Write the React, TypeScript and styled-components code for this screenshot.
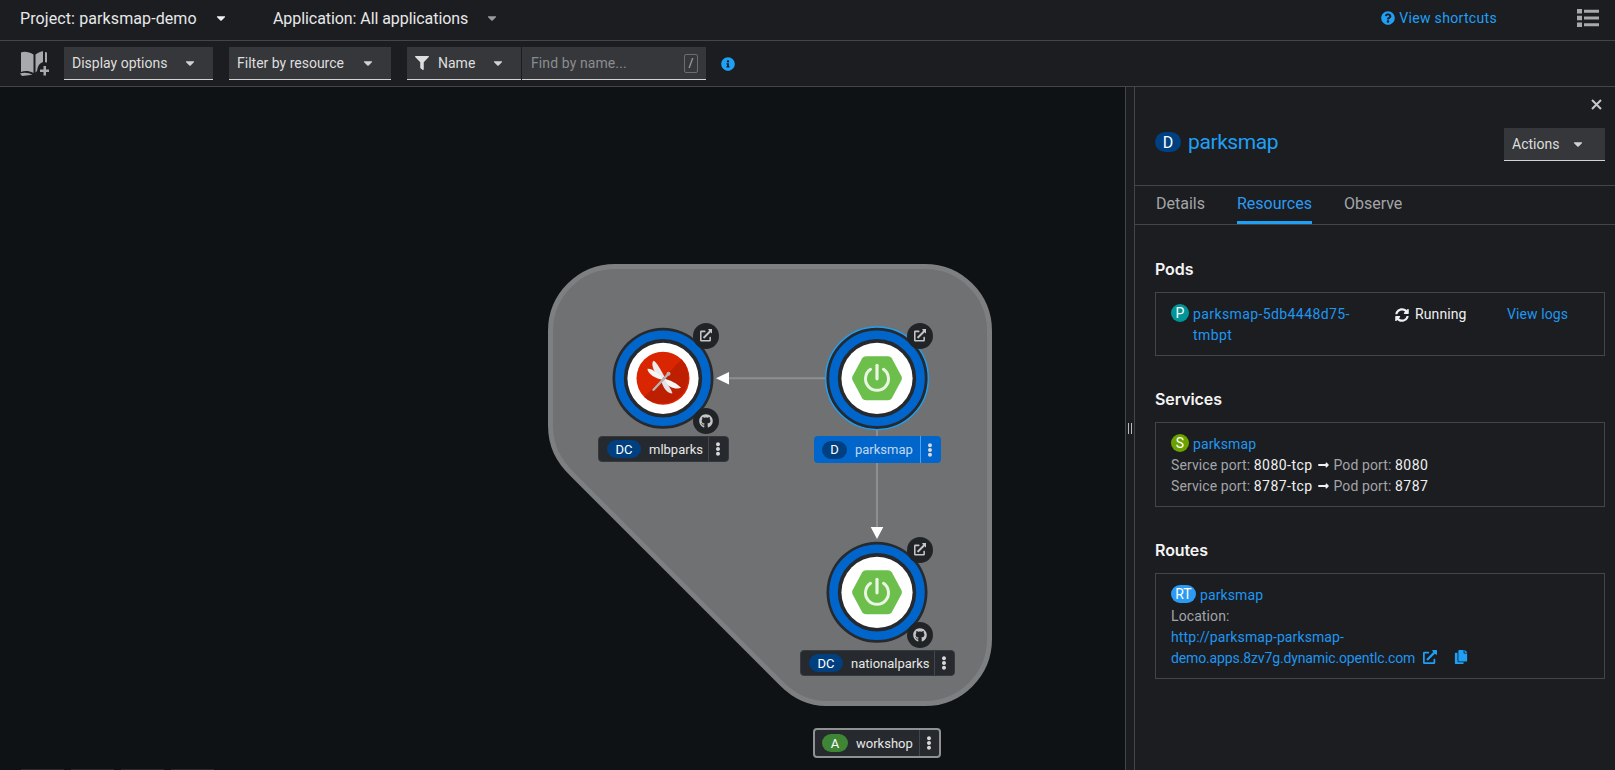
import type { FC, ReactNode } from "react";
import styled, { createGlobalStyle } from "styled-components";
import {
  FaCaretDown,
  FaCopy,
  FaEllipsisV,
  FaExternalLinkAlt,
  FaFilter,
  FaGithub,
  FaInfoCircle,
  FaLongArrowAltRight,
  FaQuestionCircle,
  FaSyncAlt,
} from "react-icons/fa";

const CANVAS_TOP = 87;

const GlobalStyle = createGlobalStyle`
  html, body {
    margin: 0;
    padding: 0;
    height: 100%;
    overflow: hidden;
    background: #1b1d21;
  }
  body {
    font-family: "Roboto", "Noto Sans", sans-serif;
    font-size: 14px;
    letter-spacing: 0.1px;
    color: #e0e0e0;
  }
  * {
    box-sizing: border-box;
  }
`;

const Page = styled.div`
  display: flex;
  flex-direction: column;
  width: 1615px;
  height: 770px;
  overflow: hidden;
`;

const TopBar = styled.div`
  display: flex;
  align-items: center;
  gap: 47px;
  height: 41px;
  padding: 0 16px 4px 20px;
  border-bottom: 1px solid #444548;
  font-size: 16px;
  color: #e8e8e8;
`;

const ProjectMenu = styled.div<{ $width: number; $spacing: number }>`
  display: flex;
  align-items: center;
  justify-content: space-between;
  width: ${(p) => p.$width}px;
  letter-spacing: ${(p) => p.$spacing}px;
  white-space: nowrap;
`;

const Caret = styled(FaCaretDown)<{ $color?: string }>`
  flex: none;
  width: 10px;
  height: 14px;
  color: ${(p) => p.$color ?? "#d2d2d2"};
`;

const Spacer = styled.div`
  flex: 1;
`;

const ShortcutLink = styled.div`
  display: flex;
  align-items: center;
  gap: 4px;
  margin-right: 33px;
  color: #1fa0f5;
  font-size: 14px;
  letter-spacing: 0.33px;
`;

const ListGlyph = styled.svg`
  width: 22px;
  height: 18px;
  color: #a8a9ab;
`;

const ToolBar = styled.div`
  display: flex;
  align-items: center;
  height: 46px;
  padding: 0 0 0 20px;
  border-bottom: 1px solid #444548;
`;

const BookGlyph = styled.svg`
  width: 29px;
  height: 25px;
  margin-right: 15px;
  color: #a8a9ab;
`;

const SelectBox = styled.div<{ $width: number; $mr?: number }>`
  display: flex;
  align-items: center;
  justify-content: space-between;
  width: ${(p) => p.$width}px;
  height: 33px;
  margin-right: ${(p) => p.$mr ?? 16}px;
  padding: 0 18px 0 8px;
  background: #36373a;
  border-bottom: 1px solid #d2d2d2;
  font-size: 14px;
  letter-spacing: 0;
  color: #dedede;
  white-space: nowrap;
`;

const NameLabel = styled.span`
  display: flex;
  align-items: center;
  gap: 9px;
`;

const SearchBox = styled.div`
  display: flex;
  align-items: center;
  justify-content: space-between;
  width: 184px;
  height: 33px;
  margin-left: 1px;
  padding: 0 8px 0 9px;
  background: #36373a;
  border-bottom: 1px solid #d2d2d2;
  color: #8a8d90;
  font-size: 14px;
`;

const SlashKey = styled.span`
  display: flex;
  align-items: center;
  justify-content: center;
  width: 14px;
  height: 19px;
  border: 1px solid #6a6e73;
  border-radius: 2px;
  font-size: 12px;
  color: #b8bbbe;
`;

const InfoButton = styled(FaInfoCircle)`
  width: 14px;
  height: 14px;
  margin-left: 15px;
  color: #1fa0f5;
`;

const Main = styled.div`
  display: flex;
  flex: 1;
  min-height: 0;
`;

const Canvas = styled.div`
  position: relative;
  flex: none;
  width: 1125px;
  overflow: hidden;
  background: #0f1214;
`;

const GraphLayer = styled.svg`
  position: absolute;
  inset: 0;
  width: 1125px;
  height: 683px;
`;

const Decorator = styled.div<{ $x: number; $y: number }>`
  position: absolute;
  left: ${(p) => p.$x - 13}px;
  top: ${(p) => p.$y - 13 - CANVAS_TOP}px;
  display: flex;
  align-items: center;
  justify-content: center;
  width: 26px;
  height: 26px;
  border-radius: 50%;
  background: #212427;
  color: #c4c5c6;
  font-size: 12.5px;
`;

const NodeLabel = styled.div<{
  $x: number;
  $y: number;
  $w: number;
  $h: number;
  $selected?: boolean;
  $group?: boolean;
}>`
  position: absolute;
  left: ${(p) => p.$x}px;
  top: ${(p) => p.$y - CANVAS_TOP}px;
  display: flex;
  align-items: center;
  width: ${(p) => p.$w}px;
  height: ${(p) => p.$h}px;
  padding-left: ${(p) => (p.$group ? 7 : 8)}px;
  border-radius: 4px;
  background: ${(p) => (p.$selected ? "#0066cc" : "#26292d")};
  border: ${(p) =>
    p.$group ? "2px solid #8f9193" : p.$selected ? "none" : "1px solid #35383c"};
  color: ${(p) => (p.$selected ? "#c3d8ef" : "#e6e7e8")};
  font-size: 13px;
  letter-spacing: 0;
`;

const KindBadge = styled.span<{ $w: number; $bg?: string }>`
  display: flex;
  flex: none;
  align-items: center;
  justify-content: center;
  width: ${(p) => p.$w}px;
  height: 18px;
  border-radius: 10px;
  background: ${(p) => p.$bg ?? "#004080"};
  color: #fff;
  font-size: 13px;
`;

const LabelName = styled.span`
  flex: 1;
  padding-left: 8px;
  white-space: nowrap;
`;

const KebabCell = styled.span<{ $selected?: boolean }>`
  display: flex;
  flex: none;
  align-items: center;
  justify-content: center;
  width: ${(p) => (p.$selected ? 21 : 20)}px;
  height: 100%;
  padding-right: ${(p) => (p.$selected ? 3 : 2)}px;
  border-left: 1px solid ${(p) => (p.$selected ? "#4ba3f5" : "#43464a")};
  color: #d8d9da;
  font-size: 14px;
`;

const ZoomBar = styled.div`
  position: absolute;
  left: 21px;
  bottom: -31px;
  display: flex;
  gap: 7px;
`;

const ZoomButton = styled.div`
  width: 43px;
  height: 32px;
  background: #26292d;
`;

const Resizer = styled.div`
  display: flex;
  flex: none;
  align-items: center;
  justify-content: center;
  width: 9px;
  border-left: 1px solid #444548;
`;

const Grip = styled.span`
  width: 4px;
  height: 11px;
  border-left: 1px solid #b8bbbe;
  border-right: 1px solid #b8bbbe;
`;

const Panel = styled.div`
  display: flex;
  flex: 1;
  flex-direction: column;
  border-left: 1px solid #444548;
`;

const PanelHead = styled.div`
  padding: 9px 10px 24px 20px;
  border-bottom: 1px solid #444548;
`;

const CloseRow = styled.div`
  display: flex;
  justify-content: flex-end;
  align-items: center;
  height: 16px;
  margin-bottom: 16px;
  padding-right: 3px;
`;

const CloseGlyph = styled.svg`
  width: 11px;
  height: 11px;
  color: #c7c7c7;
`;

const TitleRow = styled.div`
  display: flex;
  align-items: center;
  justify-content: space-between;
  height: 33px;
`;

const Title = styled.div`
  display: flex;
  align-items: center;
  gap: 7px;
  margin-top: -5px;
  color: #1fa0f5;
  font-size: 21px;
  letter-spacing: -0.4px;
`;

const HeadBadge = styled.span`
  display: flex;
  align-items: center;
  justify-content: center;
  width: 26px;
  height: 20px;
  border-radius: 10px;
  background: #004080;
  color: #fff;
  font-size: 16px;
  letter-spacing: 0;
`;

const ActionsButton = styled(SelectBox)`
  margin-right: 0;
  padding-right: 22px;
`;

const Tabs = styled.div`
  display: flex;
  gap: 32px;
  height: 39px;
  padding-left: 21px;
  border-bottom: 1px solid #444548;
`;

const Tab = styled.div<{ $active?: boolean }>`
  display: flex;
  align-items: center;
  height: 38px;
  margin-bottom: -1px;
  border-bottom: 3px solid ${(p) => (p.$active ? "#1fa0f5" : "transparent")};
  color: ${(p) => (p.$active ? "#2b9af3" : "#a3a5a8")};
  font-size: 16px;
  letter-spacing: 0;
`;

const PanelBody = styled.div`
  display: flex;
  flex-direction: column;
  gap: 33px;
  padding: 34px 10px 0 20px;
`;

const SectionTitle = styled.h3`
  margin: 0 0 13px;
  font-family: "Inter", sans-serif;
  font-size: 16px;
  font-weight: 600;
  letter-spacing: -0.1px;
  line-height: 20px;
  color: #f4f4f4;
`;

const Card = styled.div`
  padding: 11px 15px 9px;
  border: 1px solid #444548;
  line-height: 21px;
`;

const PodRow = styled.div`
  display: grid;
  grid-template-columns: 224px 112px 1fr;
`;

const ResourceLine = styled.div`
  display: flex;
  align-items: flex-start;
  gap: 4px;
`;

const ResourceBadge = styled.span<{ $bg: string; $w?: number }>`
  display: flex;
  flex: none;
  align-items: center;
  justify-content: center;
  width: ${(p) => p.$w ?? 18}px;
  height: 18px;
  border-radius: 9px;
  background: ${(p) => p.$bg};
  color: #fff;
  font-size: 14px;
`;

const Link = styled.span`
  color: #2096f0;
`;

const PodLink = styled(Link)`
  letter-spacing: 0.4px;
`;

const UrlTail = styled.span`
  letter-spacing: -0.13px;
`;

const Status = styled.div`
  display: flex;
  align-items: center;
  gap: 6px;
  height: 21px;
  color: #f0f0f0;
`;

const Muted = styled.span`
  color: #a3a5a8;
`;

const Value = styled.span`
  letter-spacing: 0.45px;
  color: #f0f0f0;
`;

const PortArrow = styled(FaLongArrowAltRight)`
  width: 13px;
  height: 12px;
  margin: 0 4px;
  vertical-align: -1px;
  color: #f0f0f0;
`;

const UrlIcons = styled.span`
  display: inline-flex;
  align-items: center;
  gap: 17px;
  margin-left: 8px;
  vertical-align: -1px;
  color: #1fa0f5;
  font-size: 14px;
`;

// spring logo, centred on 0,0 of the node
const SpringMark: FC = () => (
  <g>
    <path
      d="M-11 -22 L11 -22 Q13.5 -22 14.8 -20 L24.6 -1.8 Q25.2 0 24.6 1.8 L14.8 20 Q13.5 22 11 22 L-11 22 Q-13.5 22 -14.8 20 L-24.6 1.8 Q-25.2 0 -24.6 -1.8 L-14.8 -20 Q-13.5 -22 -11 -22 Z"
      fill="#6cbf4b"
    />
    <path
      d="M-6.5 -9 A 11.5 11.5 0 1 0 6.5 -9"
      fill="none"
      stroke="#eaf5e4"
      strokeWidth="3"
      strokeLinecap="round"
    />
    <path d="M0 -13 L0 0.5" stroke="#eaf5e4" strokeWidth="3.2" strokeLinecap="round" />
  </g>
);

const DragonflyMark: FC = () => (
  <g>
    <circle r="26.5" fill="#d92600" />
    <path d="M18.7 -18.7 A26.5 26.5 0 0 1 -18.7 18.7 Z" fill="#bd1f00" />
    <path d="M1.5 -1.5 C-2 -8 -6 -16 -9.5 -17.5 C-13 -14 -8 -4 -2 0.5 Z" fill="#ececec" />
    <path d="M-0.5 -0.5 C-5 -5 -11 -10 -15.5 -9.5 C-15.5 -4.5 -7 1 0 1.5 Z" fill="#f6f6f6" />
    <path d="M2 0.5 C7 2 14 5 18 9.5 C13 12 5 8.5 0.5 3 Z" fill="#f6f6f6" />
    <path d="M1.5 1.5 C5 6 8 11 9.5 15 C4.5 16 0 9 -1.5 3.5 Z" fill="#e4e4e4" />
    <path d="M-9.5 11.5 L6 -5" stroke="#b9b4b2" strokeWidth="2.4" strokeLinecap="round" />
    <circle cx="5.5" cy="-4.5" r="2" fill="#b9b4b2" />
  </g>
);

const GraphNode: FC<{ x: number; y: number; selected?: boolean; children: ReactNode }> = ({
  x,
  y,
  selected,
  children,
}) => (
  <g transform={`translate(${x} ${y})`}>
    {selected && <circle r="51.3" fill="#26292d" stroke="#1fa0f5" strokeWidth="1.4" />}
    {!selected && <circle r="50.5" fill="#26292d" />}
    <circle r="43.5" fill="none" stroke="#0066cc" strokeWidth="8.6" />
    <circle r="35.6" fill="#fff" />
    {children}
  </g>
);

const TopologyLabel: FC<{
  x: number;
  y: number;
  w: number;
  h?: number;
  badge: string;
  badgeW: number;
  badgeBg?: string;
  name: string;
  selected?: boolean;
  group?: boolean;
}> = ({ x, y, w, h = 26, badge, badgeW, badgeBg, name, selected, group }) => (
  <NodeLabel $x={x} $y={y} $w={w} $h={h} $selected={selected} $group={group}>
    <KindBadge $w={badgeW} $bg={badgeBg}>
      {badge}
    </KindBadge>
    <LabelName>{name}</LabelName>
    <KebabCell $selected={selected}>
      <FaEllipsisV />
    </KebabCell>
  </NodeLabel>
);

const App: FC = () => {
  return (
    <Page>
      <GlobalStyle />
      <TopBar>
        <ProjectMenu $width={206} $spacing={0.1}>
          Project: parksmap-demo
          <Caret $color="#f0f0f0" />
        </ProjectMenu>
        <ProjectMenu $width={224} $spacing={-0.07}>
          Application: All applications
          <Caret $color="#9a9b9d" />
        </ProjectMenu>
        <Spacer />
        <ShortcutLink>
          <FaQuestionCircle size={14} />
          View shortcuts
        </ShortcutLink>
        <ListGlyph viewBox="0 0 22 18">
          <path
            fill="currentColor"
            d="M0 0h5v4.5H0zM7 .8h15v3H7zM0 6.8h5v4.5H0zM7 7.5h15v3H7zM0 13.5h5V18H0zM7 14.2h15v3H7z"
          />
        </ListGlyph>
      </TopBar>

      <ToolBar>
        <BookGlyph viewBox="0 0 29 25">
          <path
            fill="currentColor"
            d="M1 1.5 C4 .2 9 .6 13.5 3.5 V22 C9 19.5 4 19.5 1 21 Z M15.5 3.5 C18 1.6 21 .6 23 .3 V11 C19.5 12 17.5 15 17 20 L15.5 21.5 Z M25 1 L27 1.5 V11.5 L25 11.2 Z M0 22.5 C4 21 9 21.5 12.5 23.8 L2 25 Z M20 18.5 h3.5 V15 h2.5 v3.5 H29.5 v2.5 H26 v3.5 h-2.5 V21 H20 Z"
          />
        </BookGlyph>
        <SelectBox $width={149}>
          Display options
          <Caret />
        </SelectBox>
        <SelectBox $width={162}>
          Filter by resource
          <Caret />
        </SelectBox>
        <SelectBox $width={114} $mr={0}>
          <NameLabel>
            <FaFilter size={14} />
            Name
          </NameLabel>
          <Caret />
        </SelectBox>
        <SearchBox>
          Find by name...
          <SlashKey>/</SlashKey>
        </SearchBox>
        <InfoButton />
      </ToolBar>

      <Main>
        <Canvas>
          <GraphLayer viewBox={`0 ${CANVAS_TOP} 1125 683`}>
            <path
              d="M550.5 331 A64.5 64.5 0 0 1 615 266.5 L925 266.5 A64.5 64.5 0 0 1 989.5 331 L989.5 639 A64.5 64.5 0 0 1 925 703.5 L826 703.5 C808 703.5 794 696 782 684 L572 474 C558 460 550.5 446 550.5 425 Z"
              fill="#707173"
              stroke="#7e7f81"
              strokeWidth="5"
            />
            <path d="M826 378.3 L728 378.3" stroke="#8d8f91" strokeWidth="2" />
            <path d="M716 378.3 L729 372 L729 384.6 Z" fill="#fff" />
            <path d="M877 430 L877 528" stroke="#8d8f91" strokeWidth="2" />
            <path d="M877 539 L870.7 527 L883.3 527 Z" fill="#fff" />
            <GraphNode x={663} y={378.3}>
              <DragonflyMark />
            </GraphNode>
            <GraphNode x={877} y={378.3} selected>
              <SpringMark />
            </GraphNode>
            <GraphNode x={877} y={592.3}>
              <SpringMark />
            </GraphNode>
          </GraphLayer>

          <Decorator $x={706} $y={335.7}>
            <FaExternalLinkAlt />
          </Decorator>
          <Decorator $x={706} $y={421.3}>
            <FaGithub size={14} />
          </Decorator>
          <Decorator $x={920} $y={335.7}>
            <FaExternalLinkAlt />
          </Decorator>
          <Decorator $x={920} $y={549.7}>
            <FaExternalLinkAlt />
          </Decorator>
          <Decorator $x={920} $y={635.3}>
            <FaGithub size={14} />
          </Decorator>

          <TopologyLabel x={598} y={436} w={131} badge="DC" badgeW={34} name="mlbparks" />
          <TopologyLabel
            x={814}
            y={436}
            w={127}
            h={27}
            badge="D"
            badgeW={25}
            name="parksmap"
            selected
          />
          <TopologyLabel x={800} y={650} w={155} badge="DC" badgeW={34} name="nationalparks" />
          <TopologyLabel
            x={813}
            y={728}
            w={128}
            h={30}
            badge="A"
            badgeW={26}
            badgeBg="#3e8635"
            name="workshop"
            group
          />
          <ZoomBar>
            <ZoomButton />
            <ZoomButton />
            <ZoomButton />
            <ZoomButton />
          </ZoomBar>
        </Canvas>

        <Resizer>
          <Grip />
        </Resizer>

        <Panel>
          <PanelHead>
            <CloseRow>
              <CloseGlyph viewBox="0 0 11 11">
                <path d="M1 1 L10 10 M10 1 L1 10" stroke="currentColor" strokeWidth="2" />
              </CloseGlyph>
            </CloseRow>
            <TitleRow>
              <Title>
                <HeadBadge>D</HeadBadge>
                parksmap
              </Title>
              <ActionsButton $width={101}>
                Actions
                <Caret />
              </ActionsButton>
            </TitleRow>
          </PanelHead>
          <Tabs>
            <Tab>Details</Tab>
            <Tab $active>Resources</Tab>
            <Tab>Observe</Tab>
          </Tabs>
          <PanelBody>
            <section>
              <SectionTitle>Pods</SectionTitle>
              <Card>
                <PodRow>
                  <ResourceLine>
                    <ResourceBadge $bg="#009596">P</ResourceBadge>
                    <PodLink>
                      parksmap-5db4448d75-
                      <br />
                      tmbpt
                    </PodLink>
                  </ResourceLine>
                  <Status>
                    <FaSyncAlt size={14} />
                    Running
                  </Status>
                  <Link>View logs</Link>
                </PodRow>
              </Card>
            </section>
            <section>
              <SectionTitle>Services</SectionTitle>
              <Card>
                <ResourceLine>
                  <ResourceBadge $bg="#6ca100">S</ResourceBadge>
                  <Link>parksmap</Link>
                </ResourceLine>
                <div>
                  <Muted>Service port: </Muted>
                  <Value>8080-tcp</Value>
                  <PortArrow />
                  <Muted>Pod port: </Muted>
                  <Value>8080</Value>
                </div>
                <div>
                  <Muted>Service port: </Muted>
                  <Value>8787-tcp</Value>
                  <PortArrow />
                  <Muted>Pod port: </Muted>
                  <Value>8787</Value>
                </div>
              </Card>
            </section>
            <section>
              <SectionTitle>Routes</SectionTitle>
              <Card>
                <ResourceLine>
                  <ResourceBadge $bg="#2b9af3" $w={25}>
                    RT
                  </ResourceBadge>
                  <Link>parksmap</Link>
                </ResourceLine>
                <Muted>Location:</Muted>
                <div>
                  <Link>
                    http://parksmap-parksmap-
                    <br />
                    <UrlTail>demo.apps.8zv7g.dynamic.opentlc.com</UrlTail>
                    <UrlIcons>
                      <FaExternalLinkAlt />
                      <FaCopy />
                    </UrlIcons>
                  </Link>
                </div>
              </Card>
            </section>
          </PanelBody>
        </Panel>
      </Main>
    </Page>
  );
};

export default App;
